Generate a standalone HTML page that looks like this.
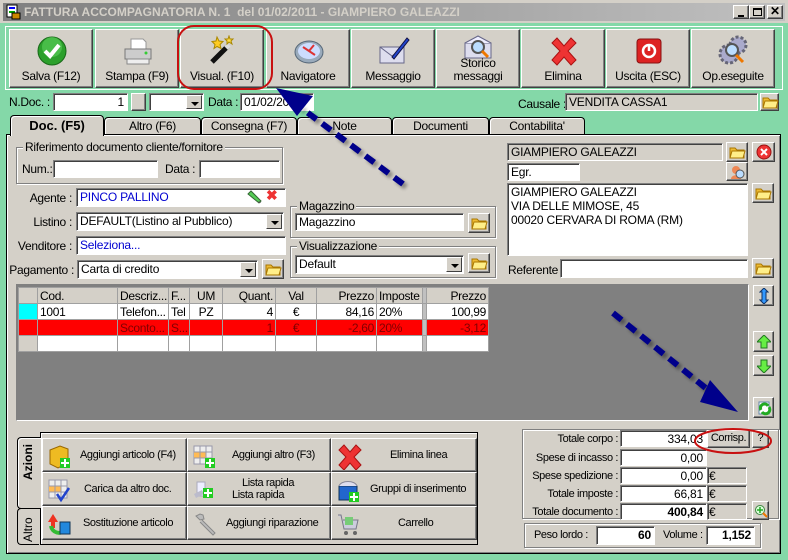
<!DOCTYPE html>
<html><head><meta charset="utf-8">
<style>
*{box-sizing:border-box;margin:0;padding:0}
body{width:788px;height:560px;overflow:hidden;background:#84d8a8;font-family:"Liberation Sans",sans-serif;font-size:11px;color:#000;position:relative}
.a{position:absolute}
.btn{position:absolute;background:#d4d0c8;border:1px solid;border-color:#fff #404040 #404040 #fff;box-shadow:inset -1px -1px 0 #808080}
.inp{position:absolute;background:#fff;border:1px solid;border-color:#808080 #fff #fff #808080;box-shadow:inset 1px 1px 0 #404040;padding:1px 3px;white-space:nowrap;overflow:hidden;font-size:12px;line-height:14px;letter-spacing:-.2px}
.lbl{position:absolute;white-space:nowrap;font-size:12px;letter-spacing:-.3px}
.r{text-align:right}
.grp{position:absolute;border:1px solid #808080;box-shadow:1px 1px 0 #fff,inset 1px 1px 0 #fff}
.grp span{position:absolute;top:-8px;left:6px;background:#d4d0c8;padding:0 2px;font-size:12px;letter-spacing:-.3px;white-space:nowrap}
.tb{position:absolute;top:29px;width:84px;height:59px;text-align:center;font-size:12px;letter-spacing:-.3px}
.tb svg{position:absolute;left:26px;top:5px}
.tb div{position:absolute;left:0;right:0;bottom:4px;line-height:13px;white-space:nowrap}
.tab{position:absolute;top:117px;height:18px;background:#d4d0c8;border:1px solid #000;border-bottom:none;border-radius:4px 4px 0 0;text-align:center;font-size:12px;line-height:16px;box-shadow:inset 1px 1px 0 #fff;letter-spacing:-.3px}
.dd{position:absolute;right:1px;top:1px;width:16px;background:#d4d0c8;border:1px solid;border-color:#fff #404040 #404040 #fff}
.dd:after{content:"";position:absolute;left:4px;top:6px;border:4px solid transparent;border-top:4px solid #000;border-bottom:none}
table{border-collapse:collapse;font-size:12px;letter-spacing:-.3px}
td{border:1px solid #a0a0a0;height:16px;padding:0 2px;white-space:nowrap;overflow:hidden}
.ab{position:absolute;font-size:11px;text-align:center;letter-spacing:-.4px}
.ab div{white-space:nowrap}
.ab svg{position:absolute;left:5px;top:5px}
.sm{font-size:11px;letter-spacing:-.4px}
</style></head><body>
<div class="a" style="left:0;top:0;width:788px;height:23px;background:#d4d0c8"></div>
<div class="a" style="left:3px;top:3px;width:782px;height:18px;background:linear-gradient(90deg,#808080,#c0c0c0)"></div>
<svg class="a" style="left:5px;top:4px" width="16" height="16"><rect x="2" y="1" width="10" height="12" fill="#fff" stroke="#000"/><rect x="4" y="3" width="6" height="2" fill="#00f"/><rect x="4" y="7" width="6" height="2" fill="#0a0"/><rect x="7" y="9" width="8" height="6" fill="#c80" stroke="#000"/></svg>
<div class="a" style="left:24px;top:5px;color:#d4d0c8;font-weight:bold;font-size:12px;white-space:nowrap;letter-spacing:0">FATTURA ACCOMPAGNATORIA N. 1 &nbsp;del 01/02/2011 - GIAMPIERO GALEAZZI</div>
<div class="btn" style="left:733px;top:5px;width:16px;height:14px"><div class="a" style="left:4px;top:9px;width:6px;height:2px;background:#000"></div></div>
<div class="btn" style="left:749px;top:5px;width:16px;height:14px"><div class="a" style="left:3px;top:2px;width:9px;height:8px;border:1px solid #000;border-top-width:2px"></div></div>
<div class="btn" style="left:767px;top:5px;width:16px;height:14px;font-size:12px;font-weight:bold;line-height:11px;text-align:center">✕</div>

<div class="a" style="left:5px;top:26px;width:778px;height:64px;border:1px solid #fff"></div>
<div class="btn tb" style="left:9px"><svg width="32" height="32"><circle cx="16" cy="16" r="14" fill="#2ca02c" stroke="#186818"/><circle cx="16" cy="12" r="10" fill="#5cd05c" opacity=".6"/><path d="M9 16l5 5 9-11" stroke="#fff" stroke-width="4" fill="none"/></svg><div>Salva (F12)</div></div>
<div class="btn tb" style="left:95px"><svg width="32" height="32"><path d="M9 4h12l3 3v8H9z" fill="#fff" stroke="#999"/><path d="M3 14h26v10H3z" fill="#ccc" stroke="#777"/><path d="M5 24h22v5H5z" fill="#eee" stroke="#888"/><circle cx="24" cy="18" r="1.5" fill="#3c3"/></svg><div>Stampa (F9)</div></div>
<div class="btn tb" style="left:180px"><svg width="32" height="32"><path d="M5 27l16-16" stroke="#111" stroke-width="5"/><path d="M19 13l3-3" stroke="#ddd" stroke-width="5"/><path d="M10 2l2 4 4 .5-3 3 1 4-4-2-3 2 1-4-3-3 4-.5z" fill="#fc2" stroke="#a80"/><path d="M22 1l1 3 3 0-2 2 1 3-3-2-2 2 0-3-2-2 3 0z" fill="#fd4" stroke="#a80"/></svg><div>Visual. (F10)</div></div>
<div class="btn tb" style="left:266px"><svg width="32" height="32"><ellipse cx="16" cy="17" rx="14" ry="11" fill="#9ab" stroke="#567"/><ellipse cx="16" cy="16" rx="11" ry="8" fill="#cdf"/><path d="M10 12l12 8M16 16l5-6" stroke="#d33" stroke-width="2"/></svg><div>Navigatore</div></div>
<div class="btn tb" style="left:351px"><svg width="32" height="32"><path d="M2 12h24v16H2z" fill="#dde" stroke="#668"/><path d="M2 12l12 9 12-9" fill="none" stroke="#668"/><path d="M14 22L29 3l2 2-15 19z" fill="#24c" stroke="#114"/></svg><div>Messaggio</div></div>
<div class="btn tb" style="left:436px"><svg width="32" height="24"><path d="M2 8h26v15H2z" fill="#dde" stroke="#668"/><path d="M2 8l13-7 13 7" fill="#eef" stroke="#668"/><circle cx="15" cy="12" r="6" fill="#bdf" stroke="#555" stroke-width="2"/><path d="M19 16l6 6" stroke="#e70" stroke-width="3"/></svg><div>Storico<br>messaggi</div></div>
<div class="btn tb" style="left:521px"><svg width="32" height="32"><path d="M4 8l5-5 7 8 7-8 5 5-8 8 8 9-5 5-7-8-7 8-5-5 8-9z" fill="#e33" stroke="#a11"/></svg><div>Elimina</div></div>
<div class="btn tb" style="left:606px"><svg width="32" height="32"><rect x="4" y="4" width="24" height="24" rx="3" fill="#d22" stroke="#811"/><circle cx="16" cy="16" r="6" fill="none" stroke="#fff" stroke-width="2.5"/><path d="M16 9v7" stroke="#fff" stroke-width="2.5"/></svg><div>Uscita (ESC)</div></div>
<div class="btn tb" style="left:691px"><svg width="32" height="32"><circle cx="20" cy="10" r="8" fill="#aac" stroke="#667" stroke-dasharray="3 2" stroke-width="3"/><circle cx="11" cy="19" r="9" fill="#aac" stroke="#667" stroke-dasharray="3 2" stroke-width="3"/><circle cx="14" cy="15" r="6" fill="#bdf" stroke="#555" stroke-width="2"/><path d="M18 20l7 7" stroke="#e70" stroke-width="3"/></svg><div>Op.eseguite</div></div>

<div class="lbl" style="left:9px;top:95px">N.Doc. :</div>
<div class="inp r" style="left:53px;top:93px;width:75px;height:18px">1</div>
<div class="btn" style="left:131px;top:93px;width:15px;height:18px"></div>
<div class="inp" style="left:149px;top:93px;width:55px;height:18px"><div class="dd" style="height:14px"></div></div>
<div class="lbl" style="left:208px;top:95px">Data :</div>
<div class="inp" style="left:240px;top:93px;width:74px;height:18px">01/02/2011</div>
<div class="lbl" style="left:518px;top:97px">Causale :</div>
<div class="inp" style="left:565px;top:93px;width:193px;height:18px;background:#d4d0c8">VENDITA CASSA1</div>

<div class="tab" style="left:104px;width:97px">Altro (F6)</div>
<div class="tab" style="left:201px;width:96px">Consegna (F7)</div>
<div class="tab" style="left:297px;width:95px">Note</div>
<div class="tab" style="left:392px;width:97px">Documenti</div>
<div class="tab" style="left:489px;width:96px">Contabilita'</div>
<div class="a" style="left:6px;top:134px;width:775px;height:420px;background:#d4d0c8;border:1px solid #000;box-shadow:inset 1px 1px 0 #fff,inset -1px -1px 0 #808080"></div>
<div class="tab" style="left:10px;top:115px;width:94px;height:21px;border-bottom:none;font-weight:bold;font-size:13px;line-height:20px;z-index:2;letter-spacing:0">Doc. (F5)</div>

<div class="grp" style="left:16px;top:147px;width:267px;height:37px"><span>Riferimento documento cliente/fornitore</span></div>
<div class="lbl" style="left:22px;top:162px">Num.:</div>
<div class="inp" style="left:53px;top:160px;width:105px;height:18px"></div>
<div class="lbl" style="left:165px;top:162px">Data :</div>
<div class="inp" style="left:199px;top:160px;width:81px;height:18px"></div>

<div class="lbl r" style="left:8px;top:191px;width:64px">Agente :</div>
<div class="inp" style="left:76px;top:188px;width:210px;height:19px;color:#0000d0">PINCO PALLINO</div>
<svg class="a" style="left:246px;top:190px" width="16" height="14"><path d="M2 4l3-3 10 10-2 2z" fill="#5c5" stroke="#363"/><path d="M13 11l2 2-3 0z" fill="#555"/></svg>
<div class="a" style="left:266px;top:187px;color:#e33;font-weight:bold;font-size:14px">✖</div>
<div class="lbl r" style="left:8px;top:215px;width:64px">Listino :</div>
<div class="inp" style="left:76px;top:212px;width:208px;height:19px">DEFAULT(Listino al Pubblico)<div class="dd" style="height:15px"></div></div>
<div class="lbl r" style="left:8px;top:239px;width:64px">Venditore :</div>
<div class="inp" style="left:76px;top:236px;width:210px;height:19px;color:#0000d0">Seleziona...</div>
<div class="lbl r" style="left:8px;top:263px;width:66px">Pagamento :</div>
<div class="inp" style="left:77px;top:260px;width:181px;height:19px">Carta di credito<div class="dd" style="height:15px"></div></div>

<div class="grp" style="left:290px;top:206px;width:206px;height:32px"><span>Magazzino</span></div>
<div class="inp" style="left:295px;top:213px;width:169px;height:18px">Magazzino</div>
<div class="grp" style="left:290px;top:246px;width:206px;height:32px"><span>Visualizzazione</span></div>
<div class="inp" style="left:295px;top:255px;width:169px;height:19px">Default<div class="dd" style="height:15px"></div></div>

<div class="inp" style="left:507px;top:143px;width:216px;height:18px;background:#d4d0c8">GIAMPIERO GALEAZZI</div>
<div class="inp" style="left:507px;top:163px;width:73px;height:18px">Egr.</div>
<div class="inp" style="left:507px;top:183px;width:241px;height:73px;white-space:normal">GIAMPIERO GALEAZZI<br>VIA DELLE MIMOSE, 45<br>00020 CERVARA DI ROMA (RM)</div>
<div class="lbl" style="left:508px;top:263px">Referente</div>
<div class="inp" style="left:560px;top:259px;width:188px;height:19px"></div>
<div class="btn" style="left:752px;top:142px;width:23px;height:20px"><svg class="a" style="left:3px;top:1px" width="16" height="16"><circle cx="8" cy="8" r="7" fill="#e33" stroke="#911"/><path d="M5 5l6 6M11 5l-6 6" stroke="#fff" stroke-width="2"/></svg></div>
<div class="btn" style="left:726px;top:162px;width:22px;height:19px"><svg class="a" style="left:3px;top:1px" width="16" height="16"><circle cx="6" cy="6" r="4" fill="#e85"/><path d="M1 15c0-5 10-5 10 0z" fill="#e85"/><circle cx="10" cy="10" r="4" fill="#bdf" stroke="#555"/></svg></div>

<div class="a" style="left:16px;top:284px;width:733px;height:137px;background:#808080;border:1px solid;border-color:#808080 #fff #fff #808080"></div>
<table class="a" style="left:18px;top:287px;background:#fff;table-layout:fixed;width:470px">
<colgroup><col style="width:19px"><col style="width:80px"><col style="width:51px"><col style="width:21px"><col style="width:33px"><col style="width:53px"><col style="width:41px"><col style="width:60px"><col style="width:46px"><col style="width:4px"><col style="width:62px"></colgroup>
<tr style="background:#d4d0c8"><td></td><td>Cod.</td><td>Descriz...</td><td>F...</td><td style="text-align:center">UM</td><td class="r">Quant.</td><td style="text-align:center">Val</td><td class="r">Prezzo</td><td>Imposte</td><td style="background:#c0c0c0"></td><td class="r">Prezzo</td></tr>
<tr><td style="background:#0ff"></td><td>1001</td><td>Telefon...</td><td>Tel</td><td style="text-align:center">PZ</td><td class="r">4</td><td style="text-align:center">€</td><td class="r">84,16</td><td>20%</td><td style="background:#c0c0c0"></td><td class="r">100,99</td></tr>
<tr style="background:#f00;color:#800000"><td></td><td></td><td>Sconto...</td><td>S...</td><td></td><td class="r">1</td><td style="text-align:center">€</td><td class="r">-2,60</td><td>20%</td><td style="background:#c0c0c0"></td><td class="r">-3,12</td></tr>
<tr><td style="background:#d4d0c8"></td><td></td><td></td><td></td><td></td><td></td><td></td><td></td><td></td><td style="background:#c0c0c0"></td><td></td></tr>
</table>
<div class="btn" style="left:753px;top:285px;width:21px;height:21px"><svg class="a" style="left:5px;top:2px" width="10" height="16"><path d="M5 0l4 4H7v8h2l-4 4-4-4h2V4H1z" fill="#39f" stroke="#136"/></svg></div>
<div class="btn" style="left:753px;top:331px;width:21px;height:21px"><svg class="a" style="left:3px;top:3px" width="14" height="14"><path d="M7 0l7 7H10v6H4V7H0z" fill="#6e4" stroke="#272"/></svg></div>
<div class="btn" style="left:753px;top:355px;width:21px;height:21px"><svg class="a" style="left:3px;top:3px" width="14" height="14"><path d="M7 14l7-7H10V1H4v6H0z" fill="#6e4" stroke="#272"/></svg></div>
<div class="btn" style="left:753px;top:397px;width:21px;height:21px"><svg class="a" style="left:3px;top:2px" width="16" height="16"><rect x="2" y="2" width="10" height="12" fill="#fff" stroke="#68a"/><path d="M4 10a4 4 0 0 1 7-4" stroke="#2a2" stroke-width="3" fill="none"/><path d="M12 7a4 4 0 0 1-7 5" stroke="#2a2" stroke-width="3" fill="none"/></svg></div>

<div class="a" style="left:40px;top:432px;width:438px;height:113px;border:1px solid #000;box-shadow:inset 1px 1px 0 #fff"></div>
<div class="a" style="left:17px;top:437px;width:24px;height:72px;background:#d4d0c8;border:1px solid #000;border-right:none;border-radius:4px 0 0 4px;box-shadow:inset 1px 1px 0 #fff"></div>
<div class="a" style="left:17px;top:508px;width:22px;height:37px;border:1px solid #000;border-right:none;border-radius:4px 0 0 4px"></div>
<div class="a" style="left:21px;top:480px;transform:rotate(-90deg);transform-origin:0 0;font-weight:bold;font-size:12px">Azioni</div>
<div class="a" style="left:21px;top:542px;transform:rotate(-90deg);transform-origin:0 0;font-size:12px">Altro</div>

<div class="btn ab" style="left:42px;top:438px;width:145px;height:34px"><svg width="24" height="26"><path d="M2 6l10-4 8 3v14l-10 5-8-4z" fill="#eb2" stroke="#960"/><rect x="12" y="14" width="10" height="10" fill="#2c2"/><path d="M17 15v8M13 19h8" stroke="#fff" stroke-width="2"/></svg><div style="position:absolute;left:37px;top:10px">Aggiungi articolo (F4)</div></div>
<div class="btn ab" style="left:187px;top:438px;width:144px;height:34px"><svg width="24" height="26"><path d="M1 2h18v18H1z" fill="#eee" stroke="#99a"/><rect x="1" y="8" width="12" height="6" fill="#fb5"/><path d="M7 2v18M13 2v18M1 8h18M1 14h18" stroke="#99a"/><rect x="12" y="14" width="10" height="10" fill="#2c2"/><path d="M17 15v8M13 19h8" stroke="#fff" stroke-width="2"/></svg><div style="position:absolute;left:44px;top:10px">Aggiungi altro (F3)</div></div>
<div class="btn ab" style="left:331px;top:438px;width:146px;height:34px"><svg width="26" height="26"><path d="M2 6l5-5 6 7 6-7 5 5-7 7 7 8-5 5-6-7-6 7-5-5 7-8z" fill="#e33" stroke="#a11"/></svg><div style="position:absolute;left:58px;top:10px">Elimina linea</div></div>
<div class="btn ab" style="left:42px;top:472px;width:145px;height:34px"><svg width="24" height="26"><path d="M1 2h18v18H1z" fill="#eee" stroke="#99a"/><rect x="1" y="8" width="12" height="6" fill="#fb5"/><path d="M7 2v18M13 2v18M1 8h18M1 14h18" stroke="#99a"/><path d="M9 16l4 6 8-12" stroke="#24c" stroke-width="2.5" fill="none"/></svg><div style="position:absolute;left:41px;top:10px">Carica da altro doc.</div></div>
<div class="btn ab" style="left:187px;top:472px;width:144px;height:34px"><svg width="24" height="26"><path d="M4 4h8v14H4z" fill="#eef" stroke="#aab"/><path d="M1 16l8-4 2 4-8 4z" fill="#bbc"/><rect x="10" y="10" width="10" height="10" fill="#2c2"/><path d="M15 11v8M11 15h8" stroke="#fff" stroke-width="2"/></svg><div style="position:absolute;left:54px;top:4px;line-height:12px">Lista rapida</div><div style="position:absolute;left:44px;top:16px;line-height:12px">Lista rapida</div></div>
<div class="btn ab" style="left:331px;top:472px;width:146px;height:34px"><svg width="26" height="26"><path d="M2 8h18v14H2z" fill="#26c" stroke="#135"/><path d="M2 8c2-6 16-6 18 0" fill="#dde" stroke="#889"/><rect x="12" y="14" width="10" height="10" fill="#2c2"/><path d="M17 15v8M13 19h8" stroke="#fff" stroke-width="2"/></svg><div style="position:absolute;left:38px;top:10px">Gruppi di inserimento</div></div>
<div class="btn ab" style="left:42px;top:506px;width:145px;height:34px"><svg width="26" height="26"><path d="M5 2l5 8H7v6H3v-6H0z" fill="#e32"/><path d="M3 14a8 8 0 0 0 14 4" stroke="#3b3" stroke-width="4" fill="none"/><path d="M12 10h10v12H12z" fill="#28d" stroke="#135"/></svg><div style="position:absolute;left:40px;top:10px">Sostituzione articolo</div></div>
<div class="btn ab" style="left:187px;top:506px;width:144px;height:34px"><svg width="26" height="26"><path d="M3 4l4 4 4-1-1-4-3-1zM9 8l13 13-2 2L7 10" fill="#bbb" stroke="#888"/></svg><div style="position:absolute;left:38px;top:10px">Aggiungi riparazione</div></div>
<div class="btn ab" style="left:331px;top:506px;width:146px;height:34px"><svg width="24" height="26"><path d="M1 3h3l3 14h12l2-9H6" fill="#ccd" stroke="#778"/><rect x="8" y="5" width="8" height="8" fill="#7c7"/><circle cx="9" cy="21" r="2" fill="#666"/><circle cx="18" cy="21" r="2" fill="#666"/></svg><div style="position:absolute;left:66px;top:10px">Carrello</div></div>

<div class="grp" style="left:522px;top:429px;width:257px;height:90px"></div>
<div class="lbl r sm" style="left:523px;top:433px;width:95px">Totale corpo :</div>
<div class="inp r" style="left:620px;top:430px;width:87px;height:17px">334,03</div>
<div class="btn" style="left:707px;top:430px;width:43px;height:18px;font-size:11px;text-align:center;line-height:15px;letter-spacing:-.4px">Corrisp.</div>
<div class="btn" style="left:752px;top:430px;width:17px;height:18px;font-size:11px;text-align:center;line-height:15px">?</div>
<div class="lbl r sm" style="left:523px;top:452px;width:95px">Spese di incasso :</div>
<div class="inp r" style="left:620px;top:449px;width:87px;height:17px">0,00</div>
<div class="lbl r sm" style="left:523px;top:470px;width:95px">Spese spedizione :</div>
<div class="inp r" style="left:620px;top:467px;width:87px;height:17px">0,00</div>
<div class="inp" style="left:707px;top:467px;width:40px;height:17px;background:#d4d0c8;padding:1px">€</div>
<div class="lbl r sm" style="left:523px;top:488px;width:95px">Totale imposte :</div>
<div class="inp r" style="left:620px;top:485px;width:87px;height:17px">66,81</div>
<div class="inp" style="left:707px;top:485px;width:40px;height:17px;background:#d4d0c8;padding:1px">€</div>
<div class="lbl r sm" style="left:523px;top:506px;width:95px">Totale documento :</div>
<div class="inp r" style="left:620px;top:503px;width:87px;height:17px;font-weight:bold">400,84</div>
<div class="inp" style="left:707px;top:503px;width:40px;height:17px;background:#d4d0c8;padding:1px">€</div>
<div class="btn" style="left:752px;top:501px;width:17px;height:19px"><svg class="a" style="left:1px;top:2px" width="14" height="14"><circle cx="6" cy="6" r="4.5" fill="#dfd" stroke="#484"/><path d="M6 3v6M3 6h6" stroke="#2a2" stroke-width="1.5"/><path d="M9 9l4 4" stroke="#e70" stroke-width="2"/></svg></div>
<div class="grp" style="left:524px;top:523px;width:237px;height:25px"></div>
<div class="lbl sm" style="left:534px;top:529px">Peso lordo :</div>
<div class="inp r" style="left:596px;top:526px;width:59px;height:19px;font-weight:bold">60</div>
<div class="lbl sm" style="left:663px;top:529px">Volume :</div>
<div class="inp r" style="left:706px;top:526px;width:49px;height:19px;font-weight:bold">1,152</div>

<svg width="0" height="0" style="position:absolute"><defs><g id="fo"><path d="M1 4h5l2 2h7v8H1z" fill="#eb3" stroke="#a70"/><path d="M3 7h13l-2 7H1z" fill="#fe8" stroke="#a70"/></g></defs></svg>
<div class="btn" style="left:760px;top:93px;width:19px;height:18px"><svg class="a" style="left:1px;top:0" width="17" height="16"><use href="#fo"/></svg></div>
<div class="btn" style="left:726px;top:142px;width:22px;height:20px"><svg class="a" style="left:2px;top:1px" width="17" height="16"><use href="#fo"/></svg></div>
<div class="btn" style="left:752px;top:183px;width:22px;height:20px"><svg class="a" style="left:2px;top:1px" width="17" height="16"><use href="#fo"/></svg></div>
<div class="btn" style="left:752px;top:258px;width:22px;height:20px"><svg class="a" style="left:2px;top:1px" width="17" height="16"><use href="#fo"/></svg></div>
<div class="btn" style="left:468px;top:213px;width:22px;height:20px"><svg class="a" style="left:2px;top:1px" width="17" height="16"><use href="#fo"/></svg></div>
<div class="btn" style="left:468px;top:253px;width:22px;height:20px"><svg class="a" style="left:2px;top:1px" width="17" height="16"><use href="#fo"/></svg></div>
<div class="btn" style="left:262px;top:259px;width:22px;height:20px"><svg class="a" style="left:2px;top:1px" width="17" height="16"><use href="#fo"/></svg></div>

<svg class="a" style="left:0;top:0" width="788" height="560">
<defs><filter id="sh"><feGaussianBlur stdDeviation="1.5"/></filter></defs>
<g opacity=".35" filter="url(#sh)" transform="translate(3,3)"><path d="M403 184L300 107M613 313L718 398" stroke="#000" stroke-width="6" stroke-dasharray="11 7"/></g>
<path d="M403 184L300 107" stroke="#00008b" stroke-width="6" stroke-dasharray="11 7"/>
<path d="M276 88L313 96L297 116z" fill="#00008b"/>
<path d="M613 313L718 398" stroke="#00008b" stroke-width="6" stroke-dasharray="11 7"/>
<path d="M710 380L738 412L700 402z" fill="#00008b"/>
<rect x="178" y="26" width="94" height="63" rx="16" fill="none" stroke="#c81010" stroke-width="2"/>
<ellipse cx="733" cy="441" rx="38" ry="12" fill="none" stroke="#c81010" stroke-width="2"/>
</svg>
</body></html>
